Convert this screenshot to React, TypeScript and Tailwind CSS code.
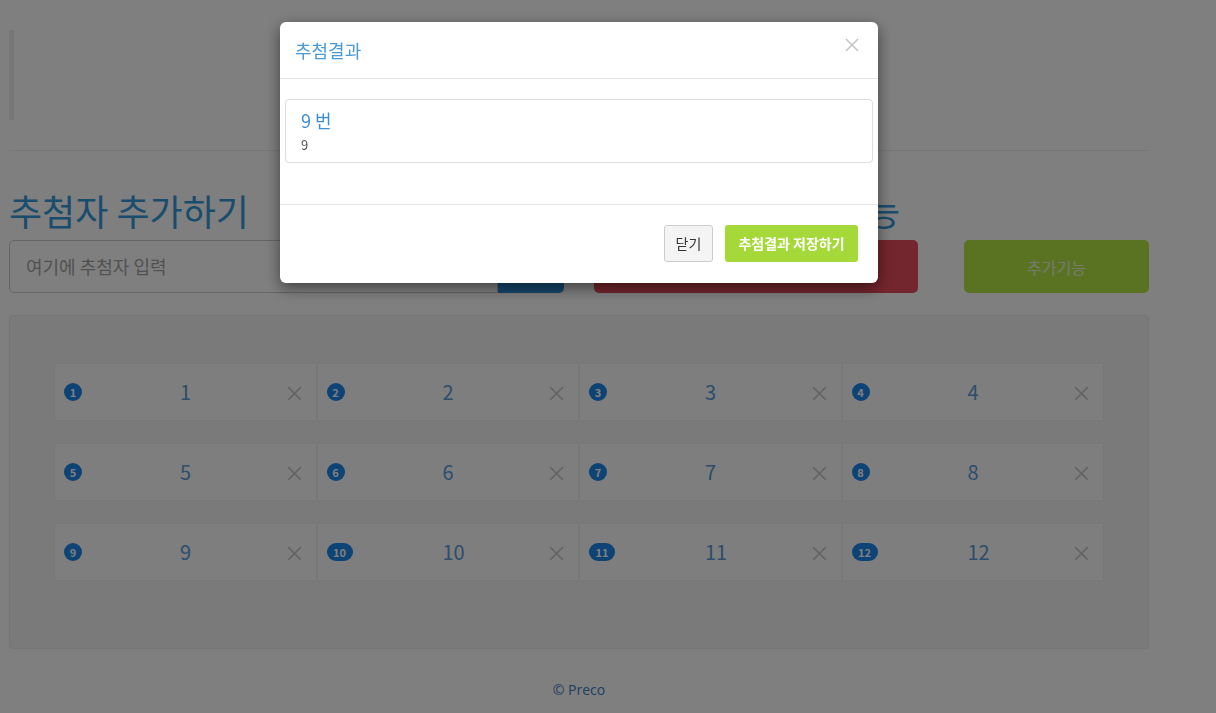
import React from "react";

const FONT = { fontFamily: '"Noto Sans CJK KR", "Noto Sans", sans-serif' };

function XIcon({ size = 14, color = "#c8c8c8", width = 1.4 }: { size?: number; color?: string; width?: number }) {
  return (
    <svg width={size} height={size} viewBox="0 0 14 14" fill="none">
      <line x1="1" y1="1" x2="13" y2="13" stroke={color} strokeWidth={width} />
      <line x1="13" y1="1" x2="1" y2="13" stroke={color} strokeWidth={width} />
    </svg>
  );
}

function Card({ n }: { n: number }) {
  const wide = n >= 10;
  return (
    <div className="relative flex h-[58px] items-center border border-[#f0f0f0] bg-[#fcfcfc]">
      <span
        className={`absolute left-[9px] top-[19px] flex h-[18px] items-center justify-center rounded-full bg-[#1a86ea] text-[11px] font-bold leading-none text-white ${
          wide ? "w-[26px]" : "w-[18px]"
        }`}
      >
        {n}
      </span>
      <span className="flex-1 pl-[125px] text-left text-[20px] leading-none text-[#5a9ad8]">{n}</span>
      <span className="absolute right-[14px] top-[22px]">
        <XIcon size={15} color="#c9c9c9" width={1.5} />
      </span>
    </div>
  );
}

export default function App() {
  const nums = Array.from({ length: 12 }, (_, i) => i + 1);
  return (
    <div className="relative min-h-[713px] w-full bg-white" style={FONT}>
      <div className="ml-[9px] w-[1140px] pt-[30px]">
        <div className="h-[90px] border-l-[5px] border-[#eeeeee]" />
        <div className="mt-[30px] border-t border-[#eeeeee]" />
        <div className="mt-[39px] flex gap-[30px]">
          <div className="w-[555px]">
            <h1 className="h-[40px] text-[36px] leading-[40px] text-[#3498db]">추첨자 추가하기</h1>
            <div className="mt-[10px] flex h-[53px]">
              <div className="flex flex-1 items-center rounded-l-[5px] border border-[#cccccc] bg-white px-[16px] text-[18px] text-[#a3a3a3]">
                여기에 추첨자 입력
              </div>
              <div className="w-[66px] rounded-r-[5px] bg-[#2a8fd8]" />
            </div>
          </div>
          <div className="w-[555px]">
            <h1 className="h-[40px] whitespace-nowrap text-[36px] leading-[40px] text-[#3498db]">추첨하기와 추가기능</h1>
            <div className="mt-[10px] flex h-[53px] gap-[46px]">
              <div className="w-[324px] rounded-[5px] bg-[#e74c5a]" />
              <div className="flex w-[185px] items-center justify-center rounded-[5px] bg-[#b2e646] text-[16px] text-[#eef7dc]">
                추가기능
              </div>
            </div>
          </div>
        </div>
        <div className="mt-[22px] h-[334px] rounded-[4px] border border-[#ebebeb] bg-[#f5f5f5] px-[44px] pt-[47px]">
          <div className="grid grid-cols-4 gap-y-[22px]">
            {nums.map((n) => (
              <Card key={n} n={n} />
            ))}
          </div>
        </div>
        <div className="mt-[31px] text-center text-[14px] leading-[20px] text-[#3a80c0]" style={{ fontFamily: '"Open Sans", sans-serif' }}>
          © Preco
        </div>
      </div>

      <div className="fixed inset-0 bg-black/50" />

      <div className="fixed left-[280px] top-[22px] w-[598px] rounded-[6px] bg-white shadow-[0_5px_15px_rgba(0,0,0,0.5)]">
        <div className="flex h-[57px] items-center justify-between border-b border-[#e5e5e5] pl-[15px] pr-[19px]">
          <span className="text-[18px] text-[#4a9ad6]">추첨결과</span>
          <span className="-mt-[10px]">
            <XIcon size={14} color="#c4c4c4" width={1.6} />
          </span>
        </div>
        <div className="h-[125px] px-[5px] pt-[20px]">
          <div className="h-[64px] rounded-[4px] border border-[#dddddd] px-[15px] pt-[8px]">
            <div className="text-[18px] leading-[24px] text-[#3b8fd6]">9 번</div>
            <div className="mt-[4px] text-[13px] leading-[18px] text-[#555555]">9</div>
          </div>
        </div>
        <div className="flex h-[79px] items-start justify-end gap-[12px] border-t border-[#e5e5e5] pr-[20px] pt-[20px]">
          <button className="h-[37px] w-[49px] rounded-[3px] border border-[#cccccc] bg-[#f4f4f4] text-[14px] text-[#333333]">
            닫기
          </button>
          <button className="h-[37px] w-[133px] rounded-[3px] bg-[#a5d93a] text-[14px] font-semibold text-white">
            추첨결과 저장하기
          </button>
        </div>
      </div>
    </div>
  );
}
